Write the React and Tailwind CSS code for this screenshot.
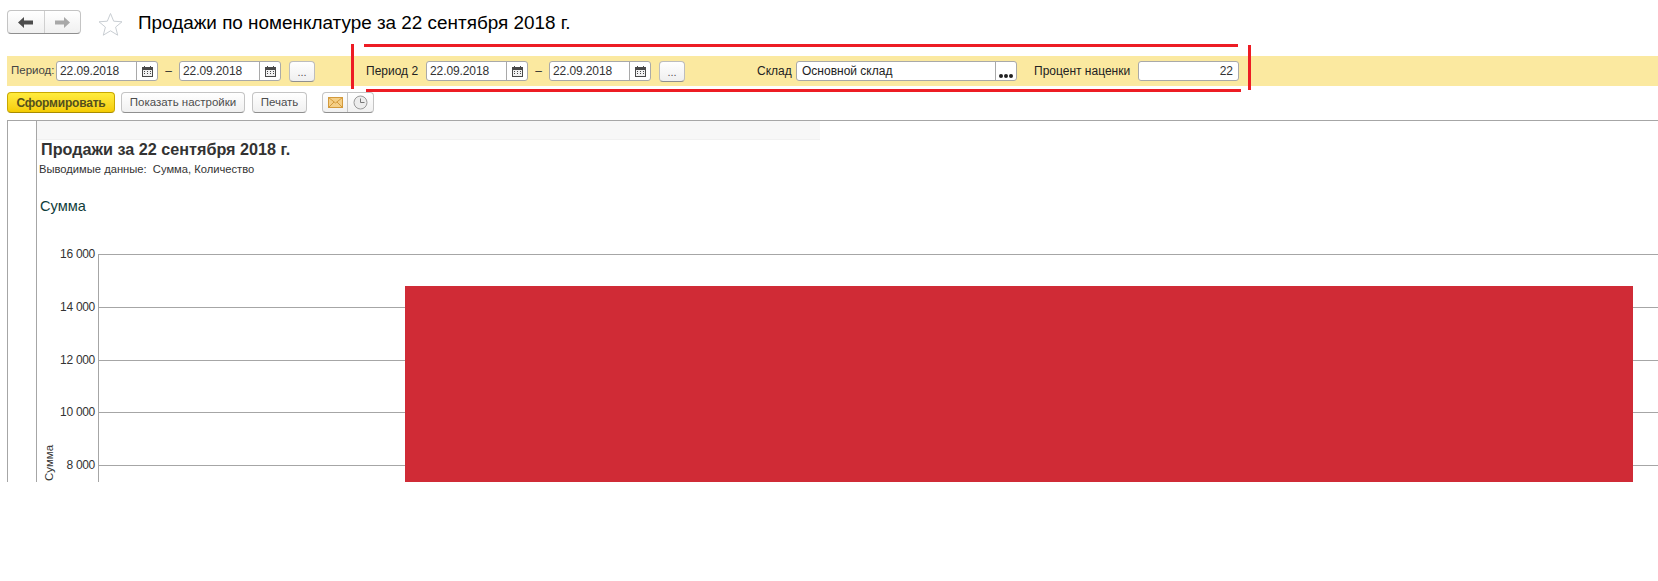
import React from "react";

const font = "font-['Liberation_Sans',Arial,sans-serif]";

function CalendarIcon() {
  return (
    <svg width="11" height="11" viewBox="0 0 11 11">
      <rect x="0.5" y="1.5" width="10" height="9" fill="#f2f2f2" stroke="#4a4a4a" />
      <rect x="0" y="1" width="11" height="3" fill="#4a4a4a" />
      <rect x="2" y="0" width="1" height="2" fill="#4a4a4a" />
      <rect x="8" y="0" width="1" height="2" fill="#4a4a4a" />
      <path d="M2 5.5h1M5 5.5h1M8 5.5h1M2 7.5h1M5 7.5h1M8 7.5h1" stroke="#4a4a4a" strokeWidth="1" />
    </svg>
  );
}

function DateField() {
  return (
    <div className="flex h-[20px] w-[102px] shrink-0 rounded-[3px] border border-[#a9a9a9] bg-white">
      <div className="flex-1 pl-[3px] text-[12px] leading-[18px] tracking-[-0.1px] text-[#333]">22.09.2018</div>
      <div className="flex w-[21px] items-center justify-center border-l border-[#a9a9a9]">
        <CalendarIcon />
      </div>
    </div>
  );
}

function DotsButton() {
  return (
    <div className="flex h-[21px] w-[26px] shrink-0 items-start justify-center rounded-[4px] border border-[#bdbdbd] border-b-[#8f8f8f] bg-gradient-to-b from-white to-[#efefef] text-[11px] leading-[20px] text-[#555]">
      ...
    </div>
  );
}

function PeriodRange() {
  return (
    <div className="flex items-center">
      <DateField />
      <div className="w-[21px] text-center text-[12px] text-[#333]">–</div>
      <DateField />
      <div className="ml-[8px]">
        <DotsButton />
      </div>
    </div>
  );
}

function ToolButton({ children, className }) {
  return (
    <div
      className={`flex h-[21px] items-center justify-center rounded-[4px] border border-[#c4c4c4] border-b-[#8f8f8f] bg-gradient-to-b from-white to-[#f0f0f0] text-[11.5px] text-[#4d4d4d] ${className}`}
    >
      {children}
    </div>
  );
}

function Chart() {
  const ticks = [
    { y: 29, label: "16 000" },
    { y: 82, label: "14 000" },
    { y: 135, label: "12 000" },
    { y: 187, label: "10 000" },
    { y: 240, label: "8 000" },
  ];
  return (
    <svg width="1621" height="257" viewBox="0 0 1621 257" className="block">
      {ticks.map((t) => (
        <g key={t.label}>
          <line x1="61" x2="1621" y1={t.y + 0.5} y2={t.y + 0.5} stroke="#a6a6a6" />
          <text x="58" y={t.y + 4} textAnchor="end" fontSize="12" fill="#333" letterSpacing="-0.3">
            {t.label}
          </text>
        </g>
      ))}
      <line x1="61.5" x2="61.5" y1="29" y2="257" stroke="#a6a6a6" />
      <rect x="368" y="61" width="1228" height="196" fill="#d02b36" />
      <text transform="translate(16 256) rotate(-90)" fontSize="11.5" fill="#333">
        Сумма
      </text>
    </svg>
  );
}

export default function App() {
  return (
    <div className={`relative h-[581px] w-[1658px] overflow-hidden bg-white ${font}`}>
      {/* Title */}
      <div className="flex h-[56px] items-start pl-[7px] pt-[10px]">
        <div className="flex h-[24px] w-[74px] rounded-[4px] border border-[#c4c4c4] border-b-[#8f8f8f] bg-gradient-to-b from-white to-[#f0f0f0]">
          <div className="flex flex-1 items-center justify-center border-r border-[#d0d0d0]">
            <svg width="15" height="11" viewBox="0 0 15 11">
              <path d="M0 5.5 6 0v3.5h9v4H6V11z" fill="#4d4d4d" />
            </svg>
          </div>
          <div className="flex flex-1 items-center justify-center">
            <svg width="15" height="11" viewBox="0 0 15 11">
              <path d="M15 5.5 9 0v3.5H0v4h9V11z" fill="#a8a8a8" />
            </svg>
          </div>
        </div>
        <svg width="25" height="25" viewBox="0 0 25 25" className="ml-[17px] mt-[2px]">
          <path
            d="M12.5 1.5l3.2 7.7 8.3.6-6.4 5.3 2.1 8.1-7.2-4.4-7.2 4.4 2.1-8.1L1 9.8l8.3-.6z"
            fill="#fff"
            stroke="#c9ced3"
          />
        </svg>
        <div className="ml-[15px] mt-[-2px] text-[18.9px] leading-[30px] text-black">
          Продажи по номенклатуре за 22 сентября 2018 г.
        </div>
      </div>

      {/* Filter band */}
      <div className="ml-[7px] flex h-[30px] items-center bg-[#fbe9a0]">
        <div className="w-[49px] pl-[4px] text-[11.5px] text-[#444]">Период:</div>
        <PeriodRange />
        <div className="ml-[51px] w-[60px] text-[12px] text-[#222]">Период 2</div>
        <PeriodRange />
        <div className="ml-[72px] w-[39px] text-[12px] text-[#222]">Склад</div>
        <div className="flex h-[20px] w-[221px] rounded-[3px] border border-[#a9a9a9] bg-white">
          <div className="flex-1 pl-[5px] text-[12px] leading-[18px] text-[#222]">Основной склад</div>
          <div className="flex w-[21px] items-end justify-center gap-[1px] border-l border-[#a9a9a9] pb-[2px]">
            <span className="h-[4px] w-[4px] rounded-full bg-[#222]" />
            <span className="h-[4px] w-[4px] rounded-full bg-[#222]" />
            <span className="h-[4px] w-[4px] rounded-full bg-[#222]" />
          </div>
        </div>
        <div className="ml-[17px] w-[104px] text-[12px] text-[#222]">Процент наценки</div>
        <div className="h-[20px] w-[101px] rounded-[3px] border border-[#a9a9a9] bg-white pr-[5px] text-right text-[12px] leading-[18px] text-[#333]">
          22
        </div>
      </div>

      {/* Toolbar */}
      <div className="ml-[7px] mt-[6px] flex h-[22px] items-start">
        <div className="flex h-[21px] w-[108px] items-center justify-center rounded-[4px] border border-[#c9a800] border-b-[#a98c00] bg-gradient-to-b from-[#ffec3d] to-[#f5cc00] text-[12px] font-bold tracking-[-0.2px] text-[#54501c]">
          Сформировать
        </div>
        <ToolButton className="ml-[6px] w-[124px]">Показать настройки</ToolButton>
        <ToolButton className="ml-[7px] w-[55px]">Печать</ToolButton>
        <ToolButton className="ml-[15px] w-[52px] !justify-start">
          <div className="flex h-full w-[25px] items-center justify-center border-r border-[#c4c4c4]">
            <svg width="15" height="11" viewBox="0 0 15 11">
              <rect x="0.5" y="0.5" width="14" height="10" fill="#f5cf86" stroke="#d39a3c" />
              <path d="M.5.5 7.5 6l7-5.5M.5 10.5 6 5M14.5 10.5 9 5" fill="none" stroke="#d39a3c" />
            </svg>
          </div>
          <div className="flex flex-1 items-center justify-center">
            <svg width="15" height="15" viewBox="0 0 15 15">
              <circle cx="7.5" cy="7.5" r="6.5" fill="#ececec" stroke="#9a9a9a" />
              <path d="M7.5 3.5v4h4" fill="none" stroke="#777" />
            </svg>
          </div>
        </ToolButton>
      </div>

      {/* Report */}
      <div className="ml-[7px] mt-[6px] flex h-[362px] overflow-hidden border-t border-[#a6a6a6]">
        <div className="w-[30px] shrink-0 border-x border-[#a6a6a6]" />
        <div className="min-w-0 flex-1">
          <div className="h-[19px] w-[783px] border-b border-[#f0f0f0] bg-[#f7f7f7]" />
          <div className="ml-[4px] text-[16.2px] font-bold leading-[18px] text-[#333]">
            Продажи за 22 сентября 2018 г.
          </div>
          <div className="ml-[2px] mt-[5px] text-[11.2px] leading-[12px] text-[#333]">
            Выводимые данные:&nbsp; Сумма, Количество
          </div>
          <div className="ml-[3px] mt-[23px] text-[14.6px] leading-[16px] text-[#0f3d3a]">Сумма</div>
          <div className="mt-[11px]">
            <Chart />
          </div>
        </div>
      </div>

      {/* Red annotation frame */}
      <div className="absolute left-[351px] top-[44px] h-[45px] w-[3px] bg-[#ed1c24]" />
      <div className="absolute left-[364px] top-[44px] h-[3px] w-[874px] bg-[#ed1c24]" />
      <div className="absolute left-[366px] top-[89px] h-[3px] w-[875px] bg-[#ed1c24]" />
      <div className="absolute left-[1248px] top-[45px] h-[45px] w-[3px] bg-[#ed1c24]" />
    </div>
  );
}
